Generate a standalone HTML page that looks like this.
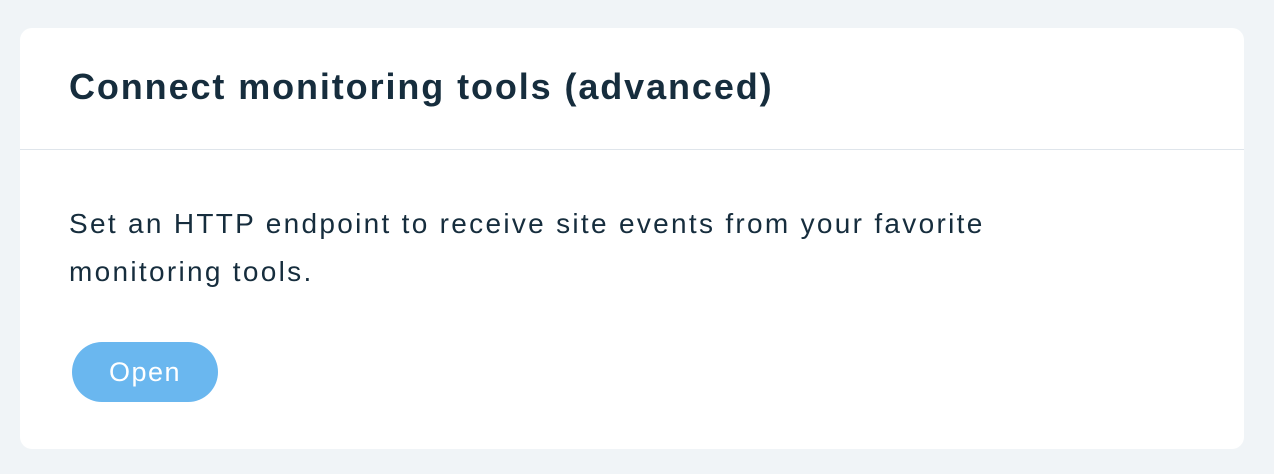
<!DOCTYPE html>
<html><head><style>
html,body{margin:0;padding:0;width:1274px;height:474px;background:#f0f4f7;font-family:"Liberation Sans",sans-serif;overflow:hidden}
.card{position:absolute;left:20px;top:28px;width:1224px;height:421px;background:#fff;border-radius:12px}
.title{position:absolute;left:49px;top:38px;font-size:36px;font-weight:bold;color:#162d3d;letter-spacing:1.9px;white-space:nowrap}
.hr{position:absolute;left:0;right:0;top:121px;height:1px;background:#dfe5eb}
.body{position:absolute;left:49px;top:172px;font-size:28px;line-height:48px;color:#162d3d;letter-spacing:2.3px;white-space:nowrap}
.btn{position:absolute;left:52px;top:314px;width:146px;height:60px;border-radius:30px;background:#6ab7ef;color:#fff;font-size:27px;letter-spacing:1.5px;text-align:center;line-height:60px}
</style></head><body>
<div class="card">
<div class="title">Connect monitoring tools (advanced)</div>
<div class="hr"></div>
<div class="body">Set an HTTP endpoint to receive site events from your favorite<br>monitoring tools.</div>
<div class="btn">Open</div>
</div>
</body></html>
